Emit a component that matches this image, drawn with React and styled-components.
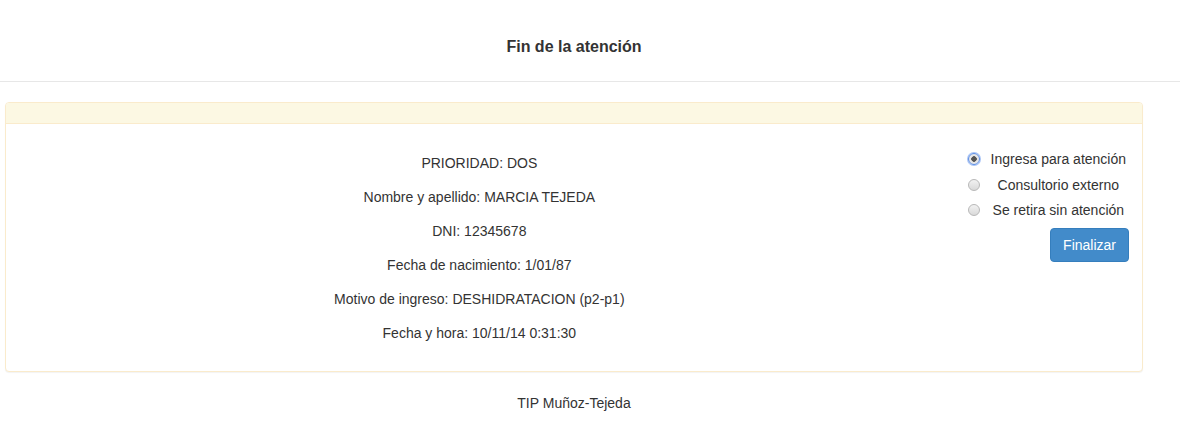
import React, { useState } from "react";
import styled, { createGlobalStyle } from "styled-components";

const GlobalStyle = createGlobalStyle`
  body {
    margin: 0;
    font-family: "Liberation Sans", Arial, sans-serif;
    font-size: 14px;
    line-height: 20px;
    color: #333;
    background: #fff;
  }
  * {
    box-sizing: border-box;
  }
`;

const Header = styled.header`
  height: 82px;
  display: flex;
  align-items: center;
  justify-content: center;
  border-bottom: 1px solid #e7e7e7;
  padding-right: 32px;
  padding-top: 12px;
`;
const Title = styled.h1`
  margin: 0;
  font-size: 16px;
  font-weight: 700;
`;
const Main = styled.main`
  width: 1138px;
  margin-left: 5px;
  padding-top: 20px;
`;
const Panel = styled.section`
  border: 1px solid #faebcc;
  border-radius: 4px;
  box-shadow: 0 1px 1px rgba(0, 0, 0, 0.05);
  background: #fff;
`;
const PanelHeading = styled.div`
  height: 21px;
  background: #fcf8e3;
  border-bottom: 1px solid #faebcc;
  border-radius: 3px 3px 0 0;
`;
const PanelBody = styled.div`
  display: grid;
  grid-template-columns: 10fr 2fr;
  padding: 15px 0;
`;
const Info = styled.div`
  display: flex;
  flex-direction: column;
  align-items: center;
  gap: 14px;
  padding: 14px 15px 13px;
`;
const Line = styled.p`
  margin: 0;
`;
const Side = styled.div`
  display: flex;
  flex-direction: column;
  align-items: stretch;
  gap: 5.5px;
  padding: 10px 13px 0 15px;
`;
const RadioRow = styled.label`
  position: relative;
  display: block;
  padding-left: 20px;
  text-align: center;
  cursor: pointer;
`;
const RadioMark = styled.span`
  position: absolute;
  left: 0;
  top: 4px;
  width: 12px;
  height: 12px;
  border-radius: 50%;
  border: 1px solid ${(p) => (p.$on ? "#5b8de6" : "#b8b8b8")};
  background: ${(p) =>
    p.$on
      ? "radial-gradient(circle, #555 0 2.5px, #e6e6e6 3px)"
      : "linear-gradient(#f2f2f2, #d9d9d9)"};
  box-shadow: ${(p) => (p.$on ? "0 0 0 1px #a9c4f5" : "none")};
`;
const HiddenInput = styled.input`
  position: absolute;
  opacity: 0;
  width: 0;
  height: 0;
`;
const ButtonRow = styled.div`
  display: flex;
  justify-content: flex-end;
  margin-top: 2px;
`;
const Button = styled.button`
  font-family: inherit;
  font-size: 14px;
  line-height: 20px;
  padding: 6px 12px;
  height: 34px;
  color: #fff;
  background: #428bca;
  border: 1px solid #357ebd;
  border-radius: 4px;
  cursor: pointer;
`;
const Footer = styled.footer`
  text-align: center;
  padding-top: 21px;
`;

const options = [
  "Ingresa para atención",
  "Consultorio externo",
  "Se retira sin atención",
];

const App = () => {
  const [selected, setSelected] = useState(0);
  return (
    <>
      <GlobalStyle />
      <Header>
        <Title>Fin de la atención</Title>
      </Header>
      <Main>
        <Panel>
          <PanelHeading />
          <PanelBody>
            <Info>
              <Line>PRIORIDAD: DOS</Line>
              <Line>Nombre y apellido: MARCIA TEJEDA</Line>
              <Line>DNI: 12345678</Line>
              <Line>Fecha de nacimiento: 1/01/87</Line>
              <Line>Motivo de ingreso: DESHIDRATACION (p2-p1)</Line>
              <Line>Fecha y hora: 10/11/14 0:31:30</Line>
            </Info>
            <Side>
              {options.map((opt, i) => (
                <RadioRow key={opt}>
                  <HiddenInput
                    type="radio"
                    name="fin"
                    checked={selected === i}
                    onChange={() => setSelected(i)}
                  />
                  <RadioMark $on={selected === i} />
                  {opt}
                </RadioRow>
              ))}
              <ButtonRow>
                <Button>Finalizar</Button>
              </ButtonRow>
            </Side>
          </PanelBody>
        </Panel>
        <Footer>TIP Muñoz-Tejeda</Footer>
      </Main>
    </>
  );
};

export default App;
